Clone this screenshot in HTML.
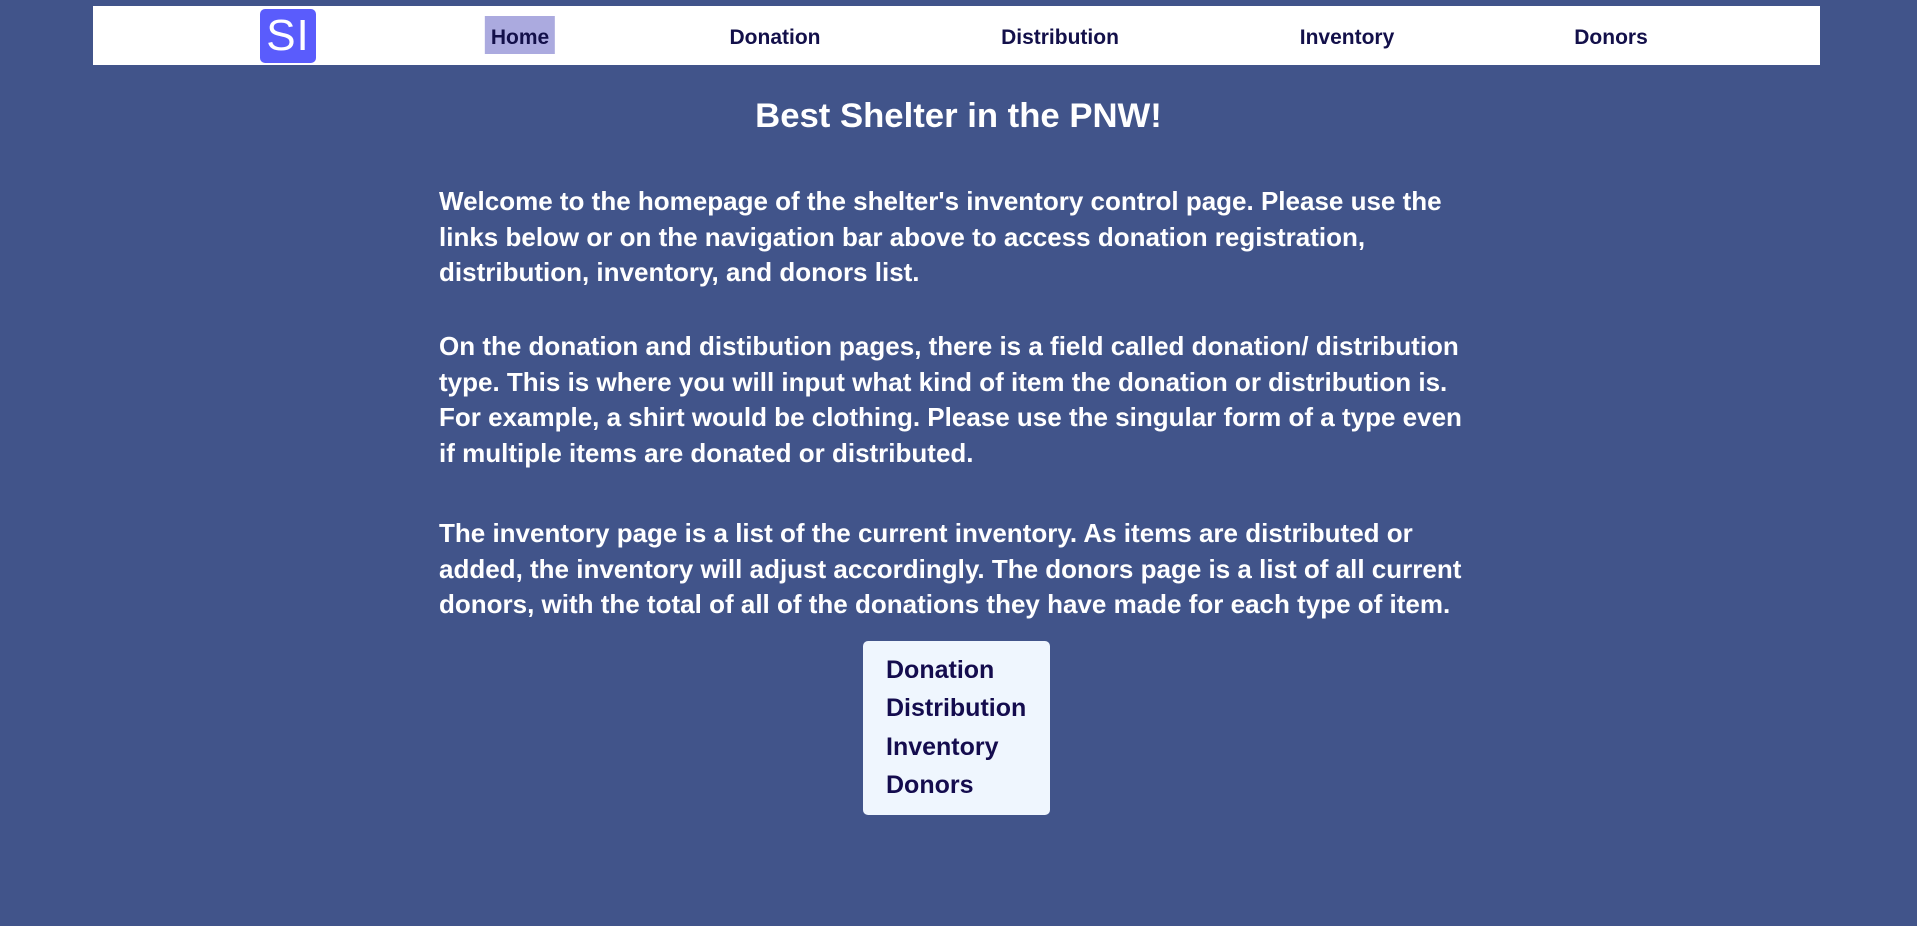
<!DOCTYPE html>
<html><head><meta charset="utf-8"><style>
html,body{margin:0;padding:0}
body{width:1917px;height:926px;background:#41548a;font-family:"Liberation Sans",Arial,sans-serif;font-weight:bold;position:relative;overflow:hidden}
.nav{position:absolute;left:93px;top:6px;width:1727px;height:59px;background:#fff}
.logo{position:absolute;left:260px;top:9px;width:56px;height:54px;background:#5a5cfc;border-radius:5px;color:#fff;font-weight:normal;font-size:44px;line-height:54px;text-align:center;letter-spacing:1px}
.ni{position:absolute;top:16px;height:38px;line-height:44px;font-size:21px;color:#13104a;transform:translateX(-50%)}
.home{background:#abaadf;padding:0 6px;line-height:44px;height:38px;overflow:hidden}
h1{position:absolute;left:0;width:1917px;top:94px;margin:0;text-align:center;color:#fff;font-size:34.7px;line-height:44px}
p{position:absolute;left:439px;width:1200px;margin:0;color:#fff;font-size:26px;line-height:35.5px;white-space:nowrap}
.box{position:absolute;left:863px;top:641px;width:187px;height:174px;background:#eff6fe;border-radius:5px}
.box div{position:absolute;left:23px;font-size:25px;color:#140c4e;line-height:30px}
</style></head><body>
<div class="nav"></div>
<div class="logo">SI</div>
<div class="ni home" style="left:520px">Home</div>
<div class="ni" style="left:775px">Donation</div>
<div class="ni" style="left:1060px">Distribution</div>
<div class="ni" style="left:1347px">Inventory</div>
<div class="ni" style="left:1611px">Donors</div>
<h1>Best Shelter in the PNW!</h1>
<p style="top:184px">Welcome to the homepage of the shelter's inventory control page. Please use the<br>links below or on the navigation bar above to access donation registration,<br>distribution, inventory, and donors list.</p>
<p style="top:329px">On the donation and distibution pages, there is a field called donation/ distribution<br>type. This is where you will input what kind of item the donation or distribution is.<br>For example, a shirt would be clothing. Please use the singular form of a type even<br>if multiple items are donated or distributed.</p>
<p style="top:516px">The inventory page is a list of the current inventory. As items are distributed or<br>added, the inventory will adjust accordingly. The donors page is a list of all current<br>donors, with the total of all of the donations they have made for each type of item.</p>
<div class="box">
<div style="top:14px">Donation</div>
<div style="top:52px">Distribution</div>
<div style="top:91px">Inventory</div>
<div style="top:129px">Donors</div>
</div>
</body></html>
